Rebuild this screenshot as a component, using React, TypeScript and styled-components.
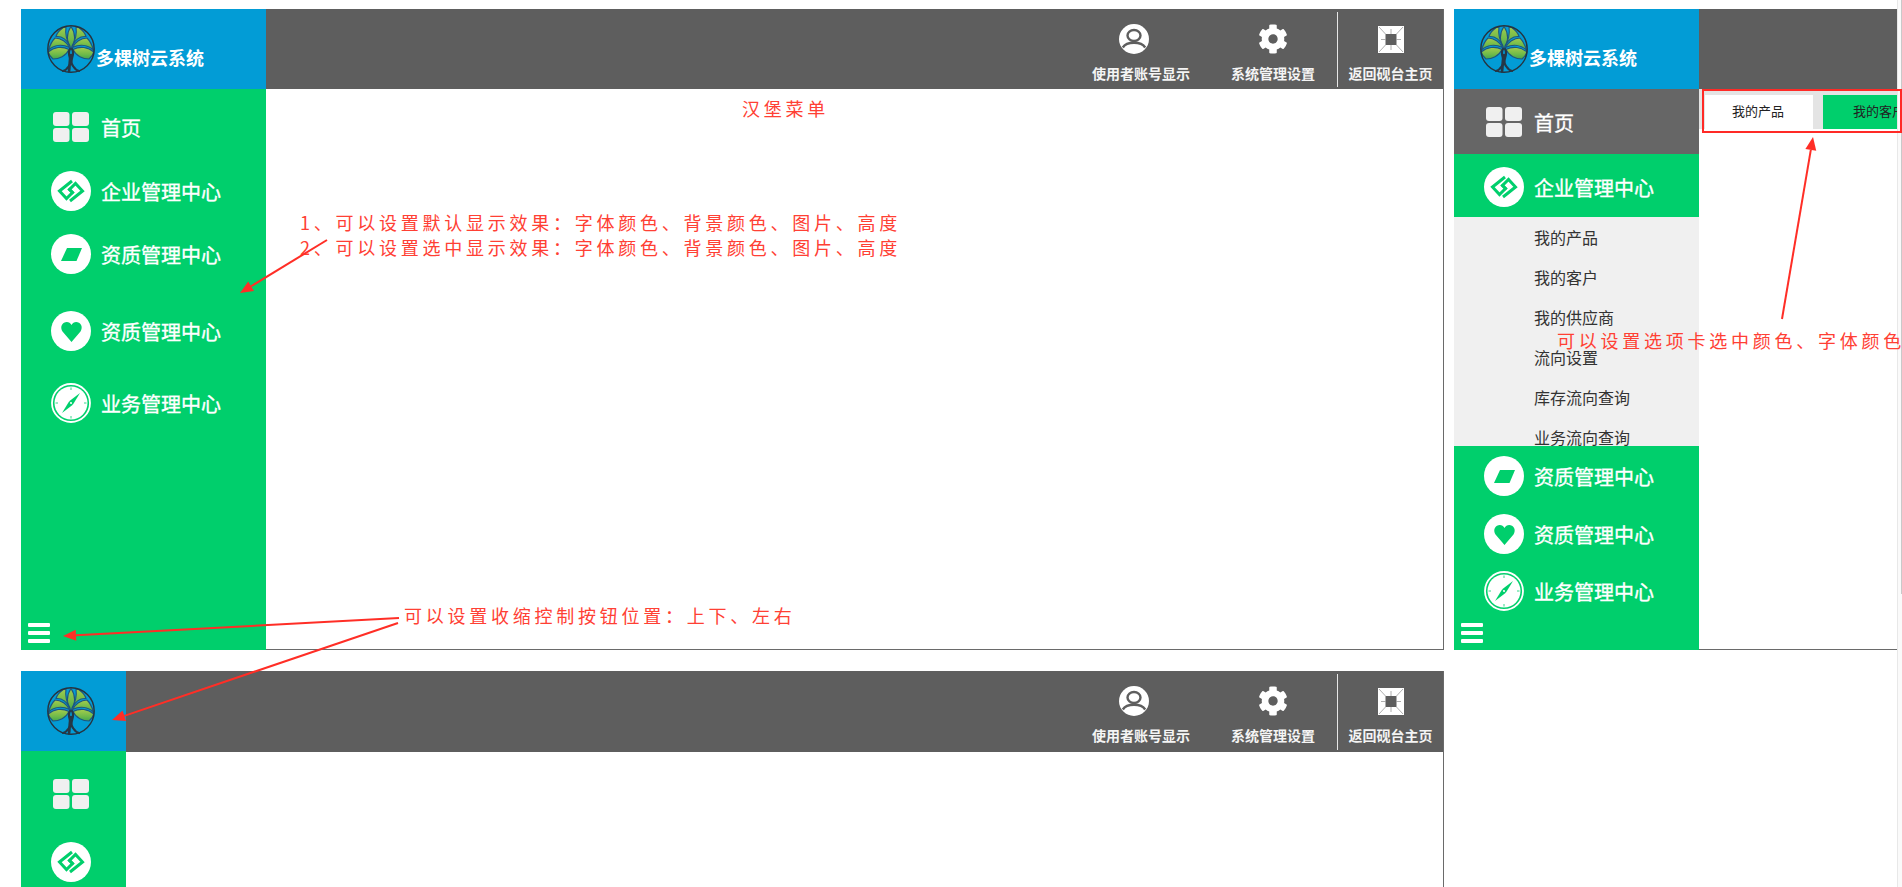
import React from "react";
import styled, { createGlobalStyle } from "styled-components";
import { FaCog } from "react-icons/fa";

const GlobalStyle = createGlobalStyle`
  html, body {
    margin: 0;
    padding: 0;
    height: 100%;
    overflow: hidden;
    background: #fff;
    font-family: "Liberation Sans", "Noto Sans CJK SC", sans-serif;
  }
`;

const GREEN = "#00cf6c";
const GREY = "#5e5e5e";
const LINE = "#6a6a6a";

const Page = styled.div`
  position: relative;
  width: 1902px;
  height: 887px;
  overflow: hidden;
  box-sizing: border-box;
  padding: 9px 0 0 21px;
`;

const TopRow = styled.div`
  display: flex;
  gap: 10px;
`;

const Frame = styled.div<{ $width: number; $height: number; $top?: number }>`
  display: flex;
  width: ${(p) => p.$width}px;
  height: ${(p) => p.$height}px;
  margin-top: ${(p) => p.$top ?? 0}px;
  overflow: hidden;
`;

const Sidebar = styled.div<{ $width: number }>`
  display: flex;
  flex-direction: column;
  flex: none;
  width: ${(p) => p.$width}px;
  background: ${GREEN};
`;

const Brand = styled.div`
  display: flex;
  flex: none;
  height: 80px;
  box-sizing: border-box;
  padding: 16px 0 0 26px;
  background: #029cd6;
`;

const BrandName = styled.div`
  margin: 22px 0 0 1px;
  height: 24px;
  line-height: 24px;
  font-size: 18px;
  font-weight: 700;
  color: #fff;
  white-space: nowrap;
`;

const MenuRow = styled.div<{ $height: number; $bg?: string; $pad?: number }>`
  display: flex;
  flex: none;
  align-items: center;
  gap: 10px;
  height: ${(p) => p.$height}px;
  box-sizing: border-box;
  padding: ${(p) => p.$pad ?? 0}px 0 0 30px;
  background: ${(p) => p.$bg ?? "transparent"};
`;

const IconSlot = styled.div`
  display: flex;
  flex: none;
  align-items: center;
  justify-content: center;
  width: 40px;
  height: 40px;
`;

const MenuText = styled.div`
  padding-top: 4px;
  font-size: 20px;
  line-height: 28px;
  color: #fff;
  -webkit-text-stroke: 0.35px #fff;
  white-space: nowrap;
`;

const SubMenu = styled.div`
  flex: none;
  height: 229px;
  overflow: hidden;
  padding-top: 2px;
  box-sizing: border-box;
  background: #f0f0f0;
`;

const SubItem = styled.div`
  height: 40px;
  padding-left: 80px;
  font-size: 16px;
  line-height: 40px;
  color: #333;
`;

const Burger = styled.div`
  display: flex;
  flex-direction: column;
  justify-content: space-between;
  width: 22px;
  height: 20px;
  margin: auto 0 7px 7px;

  span {
    display: block;
    height: 4px;
    background: #fff;
    border-radius: 1px;
  }
`;

const Main = styled.div<{ $noBottom?: boolean; $noRight?: boolean }>`
  display: flex;
  flex: 1;
  flex-direction: column;
  min-width: 0;
  box-sizing: border-box;
  border-right: ${(p) => (p.$noRight ? "none" : `1px solid ${LINE}`)};
  border-bottom: ${(p) => (p.$noBottom ? "none" : `1px solid ${LINE}`)};
`;

const Header = styled.div<{ $height: number }>`
  display: flex;
  flex: none;
  justify-content: flex-end;
  height: ${(p) => p.$height}px;
  background: ${GREY};
`;

const Tool = styled.div<{ $width: number; $left?: number }>`
  display: flex;
  flex-direction: column;
  align-items: center;
  width: ${(p) => p.$width}px;
  margin-left: ${(p) => p.$left ?? 0}px;
  padding-top: 15px;
  box-sizing: border-box;
`;

const ToolIcon = styled.div<{ $shift?: number }>`
  display: flex;
  align-items: center;
  justify-content: center;
  height: 30px;
  margin-right: ${(p) => p.$shift ?? 0}px;
  color: #fff;
`;

const ToolText = styled.div`
  margin-top: 11px;
  font-size: 14px;
  font-weight: 700;
  line-height: 18px;
  color: #f4f4f4;
  white-space: nowrap;
`;

const Divider = styled.div`
  flex: none;
  width: 1px;
  margin: 3px 0 2px 14px;
  background: #e6e6e6;
`;

const Content = styled.div`
  flex: 1;
  background: #fff;
`;

const TabBar = styled.div`
  display: flex;
  gap: 10px;
  height: 40px;
  box-sizing: border-box;
  padding: 6px 0 0 6px;
  overflow: hidden;
  background: #e4e4e4;
`;

const Tab = styled.div<{ $active?: boolean }>`
  flex: none;
  width: 108px;
  box-sizing: border-box;
  padding-left: ${(p) => (p.$active ? 30 : 27)}px;
  font-size: 13px;
  line-height: 34px;
  color: #222;
  white-space: nowrap;
  background: ${(p) => (p.$active ? GREEN : "#fff")};
`;

const Note = styled.div<{ $x: number; $y: number }>`
  position: absolute;
  left: ${(p) => p.$x}px;
  top: ${(p) => p.$y}px;
  font-family: "Noto Sans CJK SC", sans-serif;
  font-size: 18px;
  font-weight: 400;
  line-height: 24px;
  letter-spacing: 3.75px;
  color: #ff4034;
  white-space: nowrap;
`;

const Overlay = styled.svg`
  position: absolute;
  left: 0;
  top: 0;
  pointer-events: none;
`;

const Scrollbar = styled.div`
  position: absolute;
  right: 0;
  top: 0;
  width: 4px;
  height: 100%;
  border-left: 1px solid #e8e8e8;
  background: #fafafa;

  &::after {
    content: "";
    position: absolute;
    right: 0;
    top: 0;
    width: 1px;
    height: 594px;
    background: #c9c9c9;
  }
`;

const TreeLogo = ({ id }: { id: string }) => (
  <svg width="48" height="48" viewBox="0 0 48 48" style={{ flex: "none" }}>
    <defs>
      <linearGradient id={id} x1="0" y1="0" x2="0" y2="1">
        <stop offset="0" stopColor="#a4cc4c" />
        <stop offset="0.6" stopColor="#6fba4a" />
        <stop offset="1" stopColor="#42a64e" />
      </linearGradient>
    </defs>
    <g stroke="#1d5580" strokeWidth="1.1" fill={`url(#${id})`}>
      <path d="M24 23C19 17 19.5 8 24 1.5 28.500 8 29 17 24 23Z" />
      <path d="M16 2.800C12 5.500 10 8 9 11.500 15 11 20 15 23 21 20 16 18 9 19 1.800Z" />
      <path d="M32 2.800C36 5.500 38 8 39 11.500 33 11 28 15 25 21 28 16 30 9 29 1.800Z" />
      <path d="M1.500 25C3 20 5 16 8 13 14 13 20 17 22.500 22.500 15 19 7 20 1.500 25Z" />
      <path d="M46.500 25C45 20 43 16 40 13 34 13 28 17 25.500 22.500 33 19 41 20 46.500 25Z" />
      <path d="M1.200 27C7 22 15 21 22 24.500 19 31 12 34 6 34 3.500 32 2 30 1.200 27Z" />
      <path d="M46.800 27C41 22 33 21 26 24.500 29 31 36 34 42 34 44.500 32 46 30 46.800 27Z" />
    </g>
    <circle cx="24" cy="24" r="23.200" fill="none" stroke="#26333f" strokeWidth="1.400" />
    <g fill="none" stroke="#253746" strokeLinecap="round">
      <path d="M23 24C19 31 27 35 22 41 20 44 18 45.500 16 46" strokeWidth="2.200" />
      <path d="M25 24C29 31 21 35 26 41 28 44 30 45.500 32 46" strokeWidth="2.200" />
      <path d="M24 30C22 36 23 42 22 46.500" strokeWidth="2.600" />
    </g>
  </svg>
);

const GridIcon = () => (
  <svg width="36" height="30" viewBox="0 0 36 30">
    <rect x="0" y="0" width="16.500" height="14" rx="3" fill="#f0f0f0" />
    <rect x="19" y="0" width="17" height="14" rx="3" fill="#f0f0f0" />
    <rect x="0" y="16" width="16.500" height="14" rx="3" fill="#f0f0f0" />
    <rect x="19" y="16" width="17" height="14" rx="3" fill="#f0f0f0" />
  </svg>
);

const Disc = ({ children }: { children: React.ReactNode }) => (
  <svg width="40" height="40" viewBox="0 0 40 40">
    <circle cx="20" cy="20" r="20" fill="#fff" />
    {children}
  </svg>
);

const LinkIcon = () => (
  <Disc>
    <g fill="none" stroke={GREEN} strokeWidth="3" strokeLinejoin="miter">
      <path d="M21 10L8.500 20 15.500 27.500 21.500 21.500 17.500 17.500" />
      <path d="M19 30L31.500 20 24.500 12.500 18.500 18.500 22.500 22.500" />
    </g>
  </Disc>
);

const ParallelogramIcon = () => (
  <Disc>
    <path d="M16 14H31L25.500 27H10Z" fill={GREEN} />
  </Disc>
);

const HeartIcon = () => (
  <Disc>
    <path
      d="M20.500 31L11.500 20.500C9.500 17.500 10 13.500 13 11.800 16 10.200 19 11.300 20.500 14 22 11.300 25 10.200 28 11.800 31 13.500 31.500 17.500 29.500 20.500Z"
      fill={GREEN}
    />
  </Disc>
);

const CompassIcon = () => (
  <svg width="40" height="40" viewBox="0 0 40 40">
    <circle cx="20" cy="20" r="19" fill="none" stroke="#fff" strokeWidth="1.800" />
    <circle cx="20" cy="20" r="16.500" fill="#fff" />
    <path d="M29 10L21.800 21.800 18.200 18.200Z" fill={GREEN} />
    <path d="M11 30L18.200 18.200 21.800 21.800Z" fill={GREEN} />
    <circle cx="20" cy="20" r="1" fill="#fff" />
    <g stroke={GREEN} strokeWidth="0.800">
      <path d="M20 4.500V7M20 33V35.500M4.500 20H7M33 20H35.500" />
    </g>
  </svg>
);

const UserIcon = () => (
  <svg width="30" height="30" viewBox="0 0 30 30">
    <circle cx="15" cy="15" r="15" fill="#fff" />
    <ellipse cx="15" cy="11.500" rx="6.500" ry="5.500" fill="none" stroke={GREY} strokeWidth="2.400" />
    <path d="M3.800 23.500C6 20 10 18.800 15 18.800 20 18.800 24 20 26.200 23.500" fill="none" stroke={GREY} strokeWidth="2.400" />
  </svg>
);

const HomeBackIcon = () => (
  <svg width="26" height="27" viewBox="0 0 26 27">
    <rect width="26" height="27" fill="#fff" />
    <rect x="7.500" y="8" width="11" height="11" fill={GREY} />
    <g stroke="#9a9a9a" strokeWidth="0.800">
      <path d="M1 1L7.500 8M25 1L18.500 8M1 26L7.500 19M25 26L18.500 19" />
      <path d="M13 3V8M13 19V24M3 13.500H8M18 13.500H23" />
    </g>
  </svg>
);

const HeaderTools = () => (
  <>
    <Tool $width={100}>
      <ToolIcon $shift={14}>
        <UserIcon />
      </ToolIcon>
      <ToolText>使用者账号显示</ToolText>
    </Tool>
    <Tool $width={100} $left={32}>
      <ToolIcon>
        <FaCog size={30} />
      </ToolIcon>
      <ToolText>系统管理设置</ToolText>
    </Tool>
    <Divider />
    <Tool $width={105}>
      <ToolIcon>
        <HomeBackIcon />
      </ToolIcon>
      <ToolText>返回砚台主页</ToolText>
    </Tool>
  </>
);

const subItems = ["我的产品", "我的客户", "我的供应商", "流向设置", "库存流向查询", "业务流向查询"];

const Arrow = ({ x1, y1, x2, y2 }: { x1: number; y1: number; x2: number; y2: number }) => {
  const a = Math.atan2(y2 - y1, x2 - x1);
  const len = 13;
  const w = 5.5;
  const bx = x2 - Math.cos(a) * len;
  const by = y2 - Math.sin(a) * len;
  const px = -Math.sin(a) * w;
  const py = Math.cos(a) * w;
  return (
    <>
      <line x1={x1} y1={y1} x2={bx} y2={by} stroke="#ff2e26" strokeWidth="2" />
      <polygon points={`${x2},${y2} ${bx + px},${by + py} ${bx - px},${by - py}`} fill="#ff2e26" />
    </>
  );
};

const App = () => {
  return (
    <Page>
      <GlobalStyle />
      <TopRow>
        <Frame $width={1423} $height={641}>
          <Sidebar $width={245}>
            <Brand>
              <TreeLogo id="leafA" />
              <BrandName>多棵树云系统</BrandName>
            </Brand>
            <MenuRow $height={76}>
              <IconSlot><GridIcon /></IconSlot>
              <MenuText>首页</MenuText>
            </MenuRow>
            <MenuRow $height={52}>
              <IconSlot><LinkIcon /></IconSlot>
              <MenuText>企业管理中心</MenuText>
            </MenuRow>
            <MenuRow $height={74}>
              <IconSlot><ParallelogramIcon /></IconSlot>
              <MenuText>资质管理中心</MenuText>
            </MenuRow>
            <MenuRow $height={80}>
              <IconSlot><HeartIcon /></IconSlot>
              <MenuText>资质管理中心</MenuText>
            </MenuRow>
            <MenuRow $height={64}>
              <IconSlot><CompassIcon /></IconSlot>
              <MenuText>业务管理中心</MenuText>
            </MenuRow>
            <Burger><span /><span /><span /></Burger>
          </Sidebar>
          <Main>
            <Header $height={80}>
              <HeaderTools />
            </Header>
            <Content />
          </Main>
        </Frame>

        <Frame $width={443} $height={641}>
          <Sidebar $width={245}>
            <Brand>
              <TreeLogo id="leafB" />
              <BrandName>多棵树云系统</BrandName>
            </Brand>
            <MenuRow $height={65} $bg="#666666" $pad={1}>
              <IconSlot><GridIcon /></IconSlot>
              <MenuText>首页</MenuText>
            </MenuRow>
            <MenuRow $height={63} $pad={3}>
              <IconSlot><LinkIcon /></IconSlot>
              <MenuText>企业管理中心</MenuText>
            </MenuRow>
            <SubMenu>
              {subItems.map((item) => (
                <SubItem key={item}>{item}</SubItem>
              ))}
            </SubMenu>
            <MenuRow $height={59}>
              <IconSlot><ParallelogramIcon /></IconSlot>
              <MenuText>资质管理中心</MenuText>
            </MenuRow>
            <MenuRow $height={57}>
              <IconSlot><HeartIcon /></IconSlot>
              <MenuText>资质管理中心</MenuText>
            </MenuRow>
            <MenuRow $height={57}>
              <IconSlot><CompassIcon /></IconSlot>
              <MenuText>业务管理中心</MenuText>
            </MenuRow>
            <Burger><span /><span /><span /></Burger>
          </Sidebar>
          <Main $noRight>
            <Header $height={80} />
            <TabBar>
              <Tab>我的产品</Tab>
              <Tab $active>我的客户</Tab>
            </TabBar>
            <Content />
          </Main>
        </Frame>
      </TopRow>

      <Frame $width={1423} $height={216} $top={21}>
        <Sidebar $width={105}>
          <Brand>
            <TreeLogo id="leafC" />
          </Brand>
          <MenuRow $height={86}>
            <IconSlot><GridIcon /></IconSlot>
          </MenuRow>
          <MenuRow $height={50}>
            <IconSlot><LinkIcon /></IconSlot>
          </MenuRow>
        </Sidebar>
        <Main $noBottom>
          <Header $height={81}>
            <HeaderTools />
          </Header>
          <Content />
        </Main>
      </Frame>

      <Scrollbar />

      <Note $x={742} $y={96}>汉堡菜单</Note>
      <Note $x={300} $y={210}>1、可以设置默认显示效果：字体颜色、背景颜色、图片、高度</Note>
      <Note $x={300} $y={235}>2、可以设置选中显示效果：字体颜色、背景颜色、图片、高度</Note>
      <Note $x={404} $y={603}>可以设置收缩控制按钮位置：上下、左右</Note>
      <Note $x={1557} $y={328}>可以设置选项卡选中颜色、字体颜色</Note>

      <Overlay width="1902" height="887" viewBox="0 0 1902 887">
        <rect x="1703" y="90" width="198" height="42" fill="none" stroke="#ff2a26" strokeWidth="2" />
        <Arrow x1={327} y1={240} x2={240} y2={293} />
        <Arrow x1={399} y1={618} x2={63} y2={636} />
        <Arrow x1={398} y1={623} x2={112} y2={720} />
        <Arrow x1={1782} y1={319} x2={1813} y2={137} />
      </Overlay>
    </Page>
  );
};

export default App;
